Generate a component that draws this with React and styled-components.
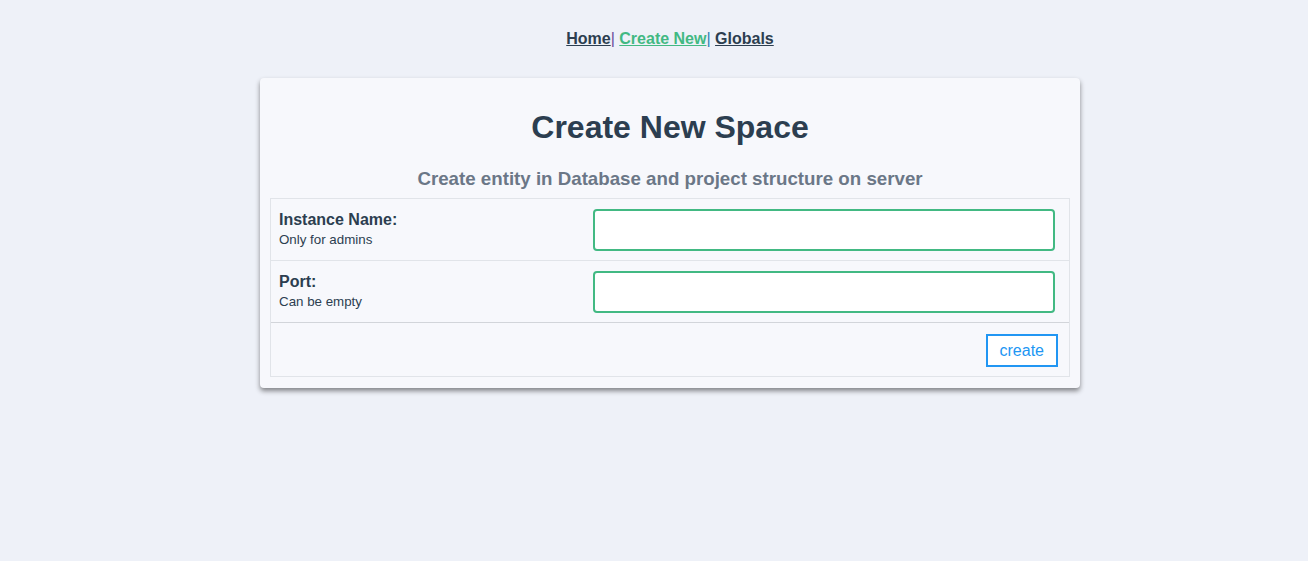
import styled, { createGlobalStyle } from 'styled-components';

const GlobalStyle = createGlobalStyle`
  body {
    margin: 0;
    background: #eef1f8;
    font-family: "Liberation Sans", Arial, Helvetica, sans-serif;
    color: #2c3e50;
  }
`;

const Page = styled.div`
  padding-left: 32px;
  padding-bottom: 40px;
`;

const Nav = styled.nav`
  padding-top: 30px;
  text-align: center;
  font-size: 16px;
  font-weight: bold;
  line-height: 18px;
`;

const NavLink = styled.a`
  color: ${(p) => (p.$active ? '#42b983' : '#2c3e50')};
  text-decoration: underline;
  cursor: pointer;
`;

const Sep = styled.span`
  color: ${(p) => p.$color};
  font-weight: normal;
`;

const Card = styled.div`
  width: 800px;
  margin: 30px auto 0;
  padding: 10px 10px 11px;
  background: #f7f8fc;
  border-radius: 4px;
  box-shadow: 0 3px 5px rgba(0, 0, 0, 0.45);
`;

const Title = styled.h1`
  margin: 21px 0 0;
  text-align: center;
  font-size: 32px;
  line-height: 37px;
  color: #2c3e50;
`;

const Subtitle = styled.h3`
  margin: 22px 0 8px;
  text-align: center;
  font-size: 18.72px;
  line-height: 22px;
  color: #6b7787;
`;

const Table = styled.div`
  border: 1px solid #e1e4e9;
`;

const Row = styled.div`
  display: grid;
  grid-template-columns: 314px 1fr;
  align-items: center;
  border-top: 1px solid ${(p) => p.$border || 'transparent'};
  &:first-child {
    border-top: none;
  }
`;

const LabelCell = styled.div`
  padding: 11px 8px 0;
  align-self: start;
`;

const Label = styled.div`
  font-size: 16px;
  font-weight: bold;
  line-height: 20px;
`;

const Hint = styled.div`
  font-size: 13.33px;
  line-height: 19px;
`;

const InputCell = styled.div`
  padding: 10px 14px 9px 8px;
`;

const Input = styled.input`
  display: block;
  box-sizing: border-box;
  width: 100%;
  height: 42px;
  border: 2px solid #42b983;
  border-radius: 4px;
  background: #fff;
  font-size: 16px;
  outline: none;
`;

const Footer = styled.div`
  display: flex;
  justify-content: flex-end;
  padding: 11px 11px 9px;
  border-top: 1px solid #d2d5da;
`;

const Button = styled.button`
  height: 33px;
  padding: 0 12px;
  background: #fff;
  border: 2px solid #2196f3;
  color: #2196f3;
  font-family: "Liberation Sans", Arial, sans-serif;
  font-size: 16px;
  cursor: pointer;
`;

const fields = [
  { label: 'Instance Name:', hint: 'Only for admins' },
  { label: 'Port:', hint: 'Can be empty' },
];

export default function App() {
  return (
    <Page>
      <GlobalStyle />
      <Nav>
        <NavLink>Home</NavLink>
        <Sep $color="#6a4a9a">| </Sep>
        <NavLink $active>Create New</NavLink>
        <Sep $color="#2f7fb5">| </Sep>
        <NavLink>Globals</NavLink>
      </Nav>
      <Card>
        <Title>Create New Space</Title>
        <Subtitle>Create entity in Database and project structure on server</Subtitle>
        <Table>
          {fields.map((f, i) => (
            <Row key={f.label} $border={i > 0 ? '#e1e4e9' : undefined}>
              <LabelCell>
                <Label>{f.label}</Label>
                <Hint>{f.hint}</Hint>
              </LabelCell>
              <InputCell>
                <Input type="text" />
              </InputCell>
            </Row>
          ))}
          <Footer>
            <Button>create</Button>
          </Footer>
        </Table>
      </Card>
    </Page>
  );
}
